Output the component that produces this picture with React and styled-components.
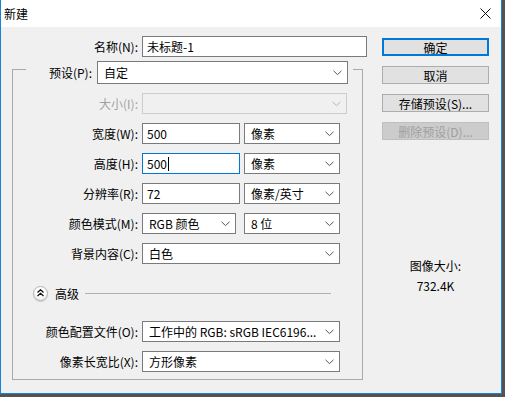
import styled, { createGlobalStyle } from 'styled-components';

const GlobalStyle = createGlobalStyle`
  html, body {
    margin: 0;
    padding: 0;
    background: #535353;
  }
  body {
    font-family: 'Noto Sans CJK SC', 'Noto Sans', sans-serif;
    font-size: 12px;
    color: #000;
  }
`

const Window = styled.div`
  width: 502px;
  height: 394px;
  box-sizing: border-box;
  border: 1px solid #1783d7;
  border-top: none;
  display: flex;
  flex-direction: column;
  background: #f0f0f0;
`

const TitleBar = styled.div`
  height: 27px;
  flex: none;
  background: #fff;
  display: flex;
  align-items: center;
  justify-content: space-between;
  padding: 0 10px 0 3px;
  font-size: 12px;
`

const Body = styled.div`
  flex: 1;
  display: flex;
  background: #f0f0f0;
`

const LeftCol = styled.div`
  width: 381px;
  flex: none;
  padding-top: 9px;
  display: flex;
  flex-direction: column;
`

const Row = styled.div`
  display: flex;
  align-items: center;
  gap: 4px;
  height: 21px;
  margin-top: ${p => p.$mt || 0}px;
`

const Label = styled.div`
  width: ${p => p.$w || 125}px;
  text-align: right;
  white-space: nowrap;
  color: ${p => (p.$disabled ? '#a2a2a2' : '#000')};
`

const TextInput = styled.div`
  width: ${p => p.$w}px;
  height: 21px;
  box-sizing: border-box;
  border: 1px solid ${p => (p.$focus ? '#0078d7' : '#7a7a7a')};
  background: #fff;
  display: flex;
  align-items: center;
  padding-left: 4px;
  white-space: nowrap;
`

const Caret = styled.span`
  display: inline-block;
  width: 1px;
  height: 14px;
  background: #000;
  margin-left: 1px;
`

const Select = styled.div`
  width: ${p => p.$w}px;
  height: ${p => p.$h || 21}px;
  flex: none;
  box-sizing: border-box;
  border: 1px solid ${p => (p.$disabled ? '#cccccc' : '#7a7a7a')};
  background: ${p => (p.$disabled ? '#f0f0f0' : '#fff')};
  display: flex;
  align-items: center;
  justify-content: space-between;
  padding: 0 5px 0 6px;
  white-space: nowrap;
  overflow: hidden;
`

const Controls = styled.div`
  width: 198px;
  display: flex;
  justify-content: space-between;
`

const GroupBox = styled.div`
  margin: 12px 0 0 11px;
  width: 351px;
  height: 311px;
  box-sizing: border-box;
  border: 1px solid #a9a9a9;
  display: flex;
  flex-direction: column;
`

const GroupHeader = styled.div`
  margin: -9px 0 0 13px;
  width: 327px;
  box-sizing: border-box;
  padding-right: 5px;
  height: 23px;
  background: #f0f0f0;
  display: flex;
  align-items: center;
  gap: 5px;
`

const HeaderLabel = styled.div`
  flex: 1;
  text-align: right;
`

const AdvancedRow = styled.div`
  display: flex;
  align-items: center;
  height: 16px;
  margin: 21px 31px 0 20px;
`

const RoundButton = styled.div`
  width: 15px;
  height: 15px;
  box-sizing: border-box;
  border-radius: 50%;
  border: 1px solid #b4b4b4;
  background: radial-gradient(circle at 50% 35%, #ffffff 40%, #e2e2e2 100%);
  box-shadow: 0 1px 1px rgba(0, 0, 0, 0.15);
  display: flex;
  align-items: center;
  justify-content: center;
`

const AdvancedText = styled.span`
  margin: 0 6px 0 7px;
`

const Rule = styled.div`
  flex: 1;
  height: 1px;
  background: #b0b0b0;
`

const RightCol = styled.div`
  width: 107px;
  padding-top: 11px;
  display: flex;
  flex-direction: column;
  gap: 10px;
`

const Button = styled.div`
  height: 18px;
  box-sizing: border-box;
  display: flex;
  align-items: center;
  justify-content: center;
  background: ${p => (p.$disabled ? '#cccccc' : '#e1e1e1')};
  border: ${p => (p.$primary ? '2px solid #0078d7' : p.$disabled ? '1px solid #bfbfbf' : '1px solid #adadad')};
  color: ${p => (p.$disabled ? '#9f9f9f' : '#000')};
  white-space: nowrap;
`

const SizeInfo = styled.div`
  margin-top: 106px;
  display: flex;
  flex-direction: column;
  align-items: center;
  line-height: 20px;
`

const Chevron = ({ disabled }) => (
  <svg width="9" height="6" viewBox="0 0 9 6">
    <polyline
      points="0.5,0.8 4.5,4.6 8.5,0.8"
      fill="none"
      stroke={disabled ? '#b5b5b5' : '#555'}
      strokeWidth="1"
    />
  </svg>
)

const CloseIcon = () => (
  <svg width="11" height="11" viewBox="0 0 11 11">
    <path d="M0.5 0.5 L10.5 10.5 M10.5 0.5 L0.5 10.5" stroke="#111" strokeWidth="1" />
  </svg>
)

const DoubleUp = () => (
  <svg width="7" height="8" viewBox="0 0 7 8">
    <path d="M0.5 3.5 L3.5 0.8 L6.5 3.5 M0.5 7 L3.5 4.3 L6.5 7" fill="none" stroke="#111" strokeWidth="1.3" />
  </svg>
)

const App = () => {
  return (
    <>
      <GlobalStyle />
      <Window>
        <TitleBar>
          <span>新建</span>
          <CloseIcon />
        </TitleBar>
        <Body>
          <LeftCol>
            <Row>
              <Label $w={137}>名称(N):</Label>
              <TextInput $w={225}>未标题-1</TextInput>
            </Row>
            <GroupBox>
              <GroupHeader>
                <HeaderLabel>预设(P):</HeaderLabel>
                <Select $w={251} $h={23}>
                  <span>自定</span>
                  <Chevron />
                </Select>
              </GroupHeader>
              <Row $mt={9}>
                <Label $disabled>大小(I):</Label>
                <Select $w={205} $disabled>
                  <span />
                  <Chevron disabled />
                </Select>
              </Row>
              <Row $mt={9}>
                <Label>宽度(W):</Label>
                <Controls>
                  <TextInput $w={98}>500</TextInput>
                  <Select $w={96}>
                    <span>像素</span>
                    <Chevron />
                  </Select>
                </Controls>
              </Row>
              <Row $mt={9}>
                <Label>高度(H):</Label>
                <Controls>
                  <TextInput $w={98} $focus>500<Caret /></TextInput>
                  <Select $w={96}>
                    <span>像素</span>
                    <Chevron />
                  </Select>
                </Controls>
              </Row>
              <Row $mt={9}>
                <Label>分辨率(R):</Label>
                <Controls>
                  <TextInput $w={98}>72</TextInput>
                  <Select $w={96}>
                    <span>像素/英寸</span>
                    <Chevron />
                  </Select>
                </Controls>
              </Row>
              <Row $mt={9}>
                <Label>颜色模式(M):</Label>
                <Controls>
                  <Select $w={94}>
                    <span>RGB 颜色</span>
                    <Chevron />
                  </Select>
                  <Select $w={96}>
                    <span>8 位</span>
                    <Chevron />
                  </Select>
                </Controls>
              </Row>
              <Row $mt={9}>
                <Label>背景内容(C):</Label>
                <Select $w={198}>
                  <span>白色</span>
                  <Chevron />
                </Select>
              </Row>
              <AdvancedRow>
                <RoundButton>
                  <DoubleUp />
                </RoundButton>
                <AdvancedText>高级</AdvancedText>
                <Rule />
              </AdvancedRow>
              <Row $mt={20}>
                <Label>颜色配置文件(O):</Label>
                <Select $w={198}>
                  <span>工作中的 RGB: sRGB IEC6196...</span>
                  <Chevron />
                </Select>
              </Row>
              <Row $mt={9}>
                <Label>像素长宽比(X):</Label>
                <Select $w={198}>
                  <span>方形像素</span>
                  <Chevron />
                </Select>
              </Row>
            </GroupBox>
          </LeftCol>
          <RightCol>
            <Button $primary>确定</Button>
            <Button>取消</Button>
            <Button>存储预设(S)...</Button>
            <Button $disabled>删除预设(D)...</Button>
            <SizeInfo>
              <span>图像大小:</span>
              <span>732.4K</span>
            </SizeInfo>
          </RightCol>
        </Body>
      </Window>
    </>
  )
}

export default App;
